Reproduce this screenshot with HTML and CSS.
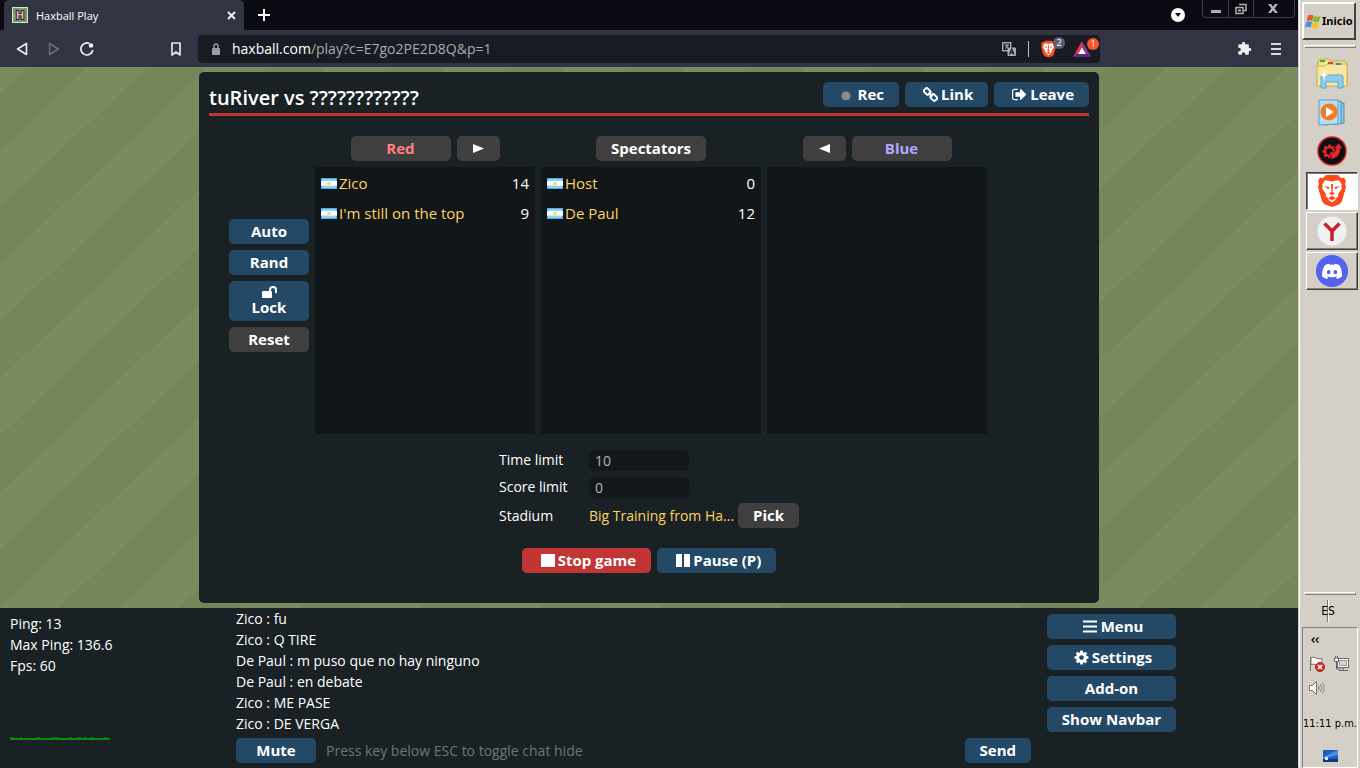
FILE: index.html
```html
<!DOCTYPE html>
<html lang="es">
<head>
<meta charset="utf-8">
<title>Haxball Play</title>
<link rel="stylesheet" href="styles.css">
</head>
<body>
<svg class="defs" aria-hidden="true">
  <symbol id="flag-ar" viewBox="0 0 16 11">
    <rect width="16" height="11" fill="#45aef0"/><rect x="1" y="1" width="14" height="2" fill="#8fd2fa"/><rect x="1" y="8" width="14" height="2" fill="#8fd2fa"/>
    <rect y="3" width="16" height="5" fill="#fbfbfb"/><rect y="7" width="16" height="1" fill="#dfe5ea"/>
    <ellipse cx="8" cy="5.500" rx="2" ry="1.500" fill="#f5dc5a"/>
  </symbol>
  <symbol id="lion" viewBox="0 0 28 32">
    <path d="M8 0h12l3 3 3-.3 2 3.300-1 3 1 3-4 14q-1 2-3 3.500L14 32l-7-2.500Q5 28 4 26L0 12l1-3-1-3 2-3.300L5 3z" fill="#fb4a1c"/>
    <path d="M14 6.500l3-.7 4-.6 3 4.500-.8 2 .8 1.500-4 6 .3 2.300-3 2.200.3 1.300L14 27.500l-3.600-2.500.3-1.300-3-2.200.3-2.300-4-6 .8-1.500-.8-2L7 5.200l4 .6z" fill="#fff"/>
    <path d="M6.500 11l5 1.200-1.200 2.300zM21.500 11l-5 1.200 1.200 2.300zM13 9h2l-.4 8 2.400 1.200L14 20.600l-3-2.400 2.400-1.200zM10.300 23l3.700-2.200 3.700 2.200-3.700 2.500z" fill="#fb4a1c"/>
  </symbol>
</svg>
<div class="desktop">
  <div class="browser">
    <header class="tabstrip">
      <div class="tab">
        <svg class="favicon" viewBox="0 0 16 16"><rect width="16" height="16" fill="#d5e8cc"/><rect x="1" y="1" width="14" height="14" fill="#6f9a5c"/><path d="M1 8l7-7h5L1 13z" fill="#82a970"/><text x="8" y="12" text-anchor="middle" class="favicon-letter">H</text></svg>
        <span class="tab-title">Haxball Play</span>
        <button class="bare" aria-label="Close tab"><svg width="9" height="9" viewBox="0 0 9 9"><path d="M1 1l7 7M8 1L1 8" stroke="#f2f2f4" stroke-width="1.800"/></svg></button>
      </div>
      <button class="bare new-tab" aria-label="New tab"><svg width="12" height="12" viewBox="0 0 12 12"><path d="M6 0v12M0 6h12" stroke="#fff" stroke-width="2"/></svg></button>
      <button class="bare tab-search" aria-label="Search tabs"><svg width="14" height="14" viewBox="0 0 14 14"><circle cx="7" cy="7" r="7" fill="#fff"/><path d="M4 5h6L7 9z" fill="#101018"/></svg></button>
      <div class="window-controls">
        <button class="bare" aria-label="Minimize"><svg width="12" height="12" viewBox="0 0 12 12"><rect x="1" y="7" width="10" height="3" fill="#b0b0b4"/></svg></button>
        <button class="bare" aria-label="Restore"><svg width="12" height="12" viewBox="0 0 12 12"><path d="M4 1.500h7v6H9M1 4.500h7v6H1z" fill="none" stroke="#b0b0b4" stroke-width="1.500"/><rect x="3" y="6.500" width="3" height="2" fill="#b0b0b4"/></svg></button>
        <button class="bare close" aria-label="Close"><svg width="10" height="9" viewBox="0 0 10 9"><path d="M0 0h3l2 2.700L7 0h3L6.500 4.400 10 9H7L5 6.200 3 9H0l3.500-4.600z" fill="#b8b8bc"/></svg></button>
      </div>
    </header>
    <nav class="toolbar">
      <div class="nav-buttons">
        <button class="bare" aria-label="Back"><svg width="12" height="14" viewBox="0 0 12 14"><path d="M10.500 1.500v11L1.500 7z" fill="none" stroke="#eee" stroke-width="1.600" stroke-linejoin="round"/></svg></button>
        <button class="bare" aria-label="Forward"><svg width="12" height="14" viewBox="0 0 12 14"><path d="M1.500 1.500v11L10.500 7z" fill="none" stroke="#6c6e7b" stroke-width="1.500" stroke-linejoin="round"/></svg></button>
        <button class="bare" aria-label="Reload"><svg width="14" height="14" viewBox="0 0 14 14"><path d="M9.500 1.600A6 6 0 1 0 12.800 8" fill="none" stroke="#eee" stroke-width="1.700"/><circle cx="11" cy="3.500" r="2.300" fill="#eee"/></svg></button>
      </div>
      <button class="bare" aria-label="Bookmark"><svg width="10" height="14" viewBox="0 0 10 14"><path d="M1 1h8v12l-4-3-4 3z" fill="none" stroke="#e4e4e8" stroke-width="1.700" stroke-linejoin="round"/></svg></button>
      <div class="address">
        <svg width="8" height="12" viewBox="0 0 8 12"><path d="M2 6V3a2 2 0 0 1 4 0v3" fill="none" stroke="#9a9ca6" stroke-width="1.400"/><rect y="5" width="8" height="7" rx="1" fill="#9a9ca6"/></svg>
        <div class="url" role="textbox" contenteditable="true" spellcheck="false" aria-label="Address"><span class="domain">haxball.com</span>/play?c=E7go2PE2D8Q&amp;p=1</div>
        <svg width="14" height="14" viewBox="0 0 14 14"><rect x=".7" y=".7" width="8" height="8" fill="none" stroke="#a9abb2" stroke-width="1.400"/><path d="M2.500 3h4.500M4.700 2v2M3 6.500q2.500-.8 3.200-3.500M3.500 4.500l3 2" stroke="#a9abb2" fill="none"/><rect x="5.500" y="5.500" width="8.500" height="8.500" rx="1" fill="#a9abb2"/><path d="M7.500 12.500l2.300-5.500 2.200 5.500M8.300 10.800h3" stroke="#181b22" fill="none" stroke-width="1.200"/></svg>
        <span class="divider"></span>
        <button class="bare ext" aria-label="Brave Shields"><svg width="15" height="18" viewBox="0 0 28 32"><use href="#lion"/></svg><span class="badge gray">2</span></button>
        <button class="bare ext" aria-label="Brave Rewards"><svg width="18" height="16" viewBox="0 0 18 16"><path d="M9 0L0 16l9-4.500z" fill="#e8364a"/><path d="M9 0l9 16-9-4.500z" fill="#8a3a9c"/><path d="M0 16h18l-5-4H5z" fill="#5a2a82"/><path d="M9 6.500l3.800 6.500H5.200z" fill="#fff"/></svg><span class="badge orange">1</span></button>
      </div>
      <div class="toolbar-end">
        <button class="bare" aria-label="Extensions"><svg width="15" height="15" viewBox="0 0 24 24"><path d="M20.500 11H19V7a2 2 0 0 0-2-2h-4V3.500a2.500 2.500 0 0 0-5 0V5H4a2 2 0 0 0-2 2v3.800h1.500a2.700 2.700 0 0 1 0 5.400H2V20a2 2 0 0 0 2 2h3.800v-1.500a2.700 2.700 0 0 1 5.400 0V22H17a2 2 0 0 0 2-2v-4h1.500a2.500 2.500 0 0 0 0-5z" fill="#eee"/></svg></button>
        <button class="bare" aria-label="Menu"><svg width="10" height="12" viewBox="0 0 10 12"><path d="M0 1h10M0 6h10M0 11h10" stroke="#dcdce0" stroke-width="2"/></svg></button>
      </div>
    </nav>

    <main class="pitch">
      <section class="room">
        <header class="room-head">
          <h1>tuRiver vs ????????????</h1>
          <button class="btn rec"><svg width="10" height="10" viewBox="0 0 10 10"><circle cx="5" cy="6" r="4.500" fill="#8c8c8c"/></svg>Rec</button>
          <button class="btn"><svg class="ico" viewBox="0 0 15 15"><g fill="none" stroke="#fff" stroke-width="2"><rect x="1" y="2" width="6.500" height="5" rx="2" transform="rotate(45 4.250 4.500)"/><rect x="7.500" y="8" width="6.500" height="5" rx="2" transform="rotate(45 10.750 10.500)"/><path d="M5.500 5.500l4 4"/></g></svg>Link</button>
          <button class="btn"><svg class="ico" viewBox="64 128 1664 1536"><path fill="#fff" d="M704 1440q0 4 1 20t.5 26.500-3 23.500-10 19.500-20.500 6.500h-320q-119 0-203.500-84.500t-84.500-203.500v-704q0-119 84.500-203.500t203.500-84.500h320q13 0 22.500 9.500t9.500 22.500q0 4 1 20t.5 26.500-3 23.500-10 19.500-20.500 6.500h-320q-66 0-113 47t-47 113v704q0 66 47 113t113 47h312l11.500 1 11.500 3 8 5.500 7 9 2 13.500zm928-544q0 26-19 45l-544 544q-19 19-45 19t-45-19-19-45v-288h-448q-26 0-45-19t-19-45v-384q0-26 19-45t45-19h448v-288q0-26 19-45t45-19 45 19l544 544q19 19 19 45z"/></svg>Leave</button>
        </header>
        <div class="teams">
          <div class="tools">
            <button class="btn">Auto</button>
            <button class="btn">Rand</button>
            <button class="btn lock"><svg width="15" height="12" viewBox="0 0 15 12"><rect y="5" width="10" height="7" rx="1" fill="#fff"/><path d="M8 6V4a3 3 0 0 1 6 0v3" fill="none" stroke="#fff" stroke-width="2"/></svg>Lock</button>
            <button class="btn dark">Reset</button>
          </div>
          <div class="team">
            <div class="team-head"><button class="btn dark wide red-text">Red</button><button class="btn dark" aria-label="Move to red"><svg width="11" height="9" viewBox="0 0 11 9"><path d="M0 0l11 4.500L0 9z" fill="#fff"/></svg></button></div>
            <ul class="players">
              <li><svg class="flag"><use href="#flag-ar"/></svg><span class="name">Zico</span><span>14</span></li>
              <li><svg class="flag"><use href="#flag-ar"/></svg><span class="name">I'm still on the top</span><span>9</span></li>
            </ul>
          </div>
          <div class="team">
            <div class="team-head"><button class="btn dark">Spectators</button></div>
            <ul class="players">
              <li><svg class="flag"><use href="#flag-ar"/></svg><span class="name">Host</span><span>0</span></li>
              <li><svg class="flag"><use href="#flag-ar"/></svg><span class="name">De Paul</span><span>12</span></li>
            </ul>
          </div>
          <div class="team">
            <div class="team-head"><button class="btn dark" aria-label="Move to blue"><svg width="11" height="9" viewBox="0 0 11 9"><path d="M11 0L0 4.500 11 9z" fill="#fff"/></svg></button><button class="btn dark wide blue-text">Blue</button></div>
            <ul class="players"></ul>
          </div>
        </div>
        <form class="settings">
          <label for="time">Time limit</label><input id="time" class="field" value="10">
          <label for="score">Score limit</label><input id="score" class="field" value="0">
          <span class="label">Stadium</span>
          <div class="stadium"><span class="stadium-name">Big Training from Ha...</span><button type="button" class="btn dark">Pick</button></div>
        </form>
        <div class="controls">
          <button class="btn stop"><svg class="ico" viewBox="0 0 15 15"><rect x="1" y="1" width="14" height="13" fill="#fff"/></svg>Stop game</button>
          <button class="btn"><svg class="ico" viewBox="0 0 15 15"><path d="M1 1h6v13H1zM9 1h6v13H9z" fill="#fff"/></svg>Pause (P)</button>
        </div>
      </section>
    </main>

    <footer class="bottom">
      <div class="stats">
        <p>Ping: 13</p><p>Max Ping: 136.6</p><p>Fps: 60</p>
        <svg class="graph" viewBox="0 0 100 3"><path d="M0 1h100v2H0z" fill="#0a8a0a"/><path d="M0 .5h4m6 0h2m14 0h4m11 0h8m10 0h3m5 0h4m2 0h4m3 0h4m10 0h3" stroke="#0a700a"/></svg>
      </div>
      <div class="chat">
        <div class="log">
          <p>Zico : fu</p><p>Zico : Q TIRE</p><p>De Paul : m puso que no hay ninguno</p><p>De Paul : en debate</p><p>Zico : ME PASE</p><p>Zico : DE VERGA</p>
        </div>
        <form class="compose">
          <button type="button" class="btn mute">Mute</button>
          <input class="message" aria-label="Chat message" placeholder="Press key below ESC to toggle chat hide">
          <button type="button" class="btn">Send</button>
        </form>
      </div>
      <div class="side-menu">
        <button class="btn"><svg class="ico" viewBox="0 0 15 15"><path d="M0 2.500h14M0 7.500h14M0 12.500h14" stroke="#fff" stroke-width="2"/></svg>Menu</button>
        <button class="btn"><svg class="ico" viewBox="64 64 1664 1664"><path fill="#fff" d="M1152 896q0-106-75-181t-181-75-181 75-75 181 75 181 181 75 181-75 75-181zm512-109v222q0 12-8 23t-20 13l-185 28q-19 54-39 91 35 50 107 138 10 12 10 25t-9 23q-27 37-99 108t-94 71q-12 0-26-9l-138-108q-44 23-91 38-16 136-29 186-7 28-36 28h-222q-14 0-24.500-8.500t-11.500-21.500l-28-184q-49-16-90-37l-141 107q-10 9-25 9-14 0-25-11-126-114-165-168-7-10-7-23 0-12 8-23 15-21 51-66.500t54-70.500q-27-50-41-99l-183-27q-13-2-21-12.500t-8-23.500v-222q0-12 8-23t19-13l186-28q14-46 39-92-40-57-107-138-10-12-10-24 0-10 9-23 26-36 98.500-107.500t94.500-71.500q13 0 26 10l138 107q44-23 91-38 16-136 29-186 7-28 36-28h222q14 0 24.500 8.500t11.500 21.500l28 184q49 16 90 37l142-107q9-9 24-9 13 0 25 10 129 119 165 170 7 8 7 22 0 12-8 23-15 21-51 66.500t-54 70.500q26 50 41 98l183 28q13 2 21 12.500t8 23.500z"/></svg>Settings</button>
        <button class="btn">Add-on</button>
        <button class="btn">Show Navbar</button>
      </div>
    </footer>
  </div>

  <aside class="taskbar">
    <button class="start"><svg width="16" height="15" viewBox="0 0 16 15"><path d="M3 1.500q3-1.500 5.500 0L7.300 7Q4.500 5.500 1.500 7z" fill="#e8552c"/><path d="M9 2q3 1.500 6.500 0L14 7.500q-3 1.500-6.200 0z" fill="#7fba3a"/><path d="M1.300 8q3-1.500 5.700 0l-1.300 5.500Q3 12 0 13.500z" fill="#4b8fdc"/><path d="M7.500 8.500q3 1.500 6.300 0L12.500 14q-3 1.500-6.200 0z" fill="#f5c02c"/></svg>Inicio</button>
    <span class="rule"></span>
    <div class="pinned">
      <button class="bare" aria-label="Explorer"><svg width="32" height="32" viewBox="0 0 32 32"><path d="M2 4l2-3h9l2 2h14l2 3v21H1z" fill="#f3df8c" stroke="#c9a94a"/><path d="M1 8h8l2-2h20v22H1z" fill="#f8e89f" stroke="#d0b050"/><path d="M4 2h5v2H4z" fill="#2fb32f"/><path d="M12 4h5v2h-5z" fill="#d0443a"/><path d="M20 5h5v2h-5z" fill="#2a8ad8"/><path d="M5 19q0-2 2-2h18q2 0 2 2v11h-5v-6H10v6H5z" fill="#8ecdf0" stroke="#58a6d0"/><path d="M8 11l1 5 4 1-4 1-1 5-1-5-4-1 4-1z" fill="#fff"/></svg></button>
      <button class="bare" aria-label="Media Player"><svg width="30" height="28" viewBox="0 0 30 28"><path d="M8 3l19 1v20l-19 2z" fill="#8fc3e3" stroke="#4d94c0"/><path d="M6 2h18v23H6z" fill="#a9d2ea" stroke="#4d94c0"/><path d="M2 1h19v24l-19 1z" fill="#b9dcf1" stroke="#5a9fc8"/><circle cx="12" cy="13" r="8.500" fill="#f27c22"/><path d="M9 8l8 5-8 5z" fill="#fff"/></svg></button>
      <button class="bare" aria-label="Booster"><svg width="30" height="30" viewBox="0 0 30 30"><circle cx="15" cy="15" r="14" fill="#101010" stroke="#c9202a" stroke-width="1.500"/><circle cx="12.500" cy="15.500" r="4.500" fill="none" stroke="#e8252c" stroke-width="2.500"/><path d="M12.500 8.500v2.500M12.500 20v2.500M5.500 15.500H8M7.500 10.500l2 2M7.500 20.500l2-2M17 10.500l-2 2" stroke="#e8252c" stroke-width="2.500"/><path d="M12 17.500l4-3v2q3-1 3-4h-2.500l5-5.500 4.500 5.500h-2.500q0 8-7.500 10.500-2 .5-4-.5l3-1.500z" fill="#e8252c" stroke="#101010" stroke-width=".7"/></svg></button>
    </div>
    <div class="windows">
      <button class="task active" aria-label="Brave"><svg width="28" height="32"><use href="#lion"/></svg></button>
      <button class="task" aria-label="Yandex"><svg width="32" height="32" viewBox="0 0 32 32"><circle cx="16" cy="16" r="15" fill="#f1f1f1" stroke="#d8d8d8"/><path d="M8.500 8.500L16 16l7.500-7.500M16 15.500V26" stroke="#c8202a" stroke-width="3.500" fill="none"/></svg></button>
      <button class="task" aria-label="Discord"><svg width="32" height="32" viewBox="0 0 32 32"><circle cx="16" cy="16" r="16" fill="#5562f0"/><path transform="translate(6 6.300) scale(.84)" fill="#fff" d="M20.317 4.370a19.791 19.791 0 0 0-4.885-1.515.074.074 0 0 0-.079.037c-.21.375-.444.865-.608 1.250a18.270 18.270 0 0 0-5.487 0 12.640 12.640 0 0 0-.617-1.250.077.077 0 0 0-.079-.037A19.736 19.736 0 0 0 3.677 4.370a.07.07 0 0 0-.032.028C.533 9.046-.32 13.580.099 18.058a.082.082 0 0 0 .031.056 19.900 19.900 0 0 0 5.993 3.030.078.078 0 0 0 .084-.028c.462-.63.874-1.295 1.226-1.994a.076.076 0 0 0-.042-.106 13.107 13.107 0 0 1-1.872-.892.077.077 0 0 1-.008-.128c.126-.094.252-.192.372-.291a.074.074 0 0 1 .078-.01c3.928 1.793 8.180 1.793 12.062 0a.074.074 0 0 1 .078.009c.12.1.246.199.373.292a.077.077 0 0 1-.006.128 12.300 12.300 0 0 1-1.873.891.077.077 0 0 0-.041.107c.36.698.772 1.363 1.225 1.993a.076.076 0 0 0 .084.029 19.839 19.839 0 0 0 6.002-3.030.077.077 0 0 0 .031-.055c.5-5.177-.838-9.674-3.549-13.660a.061.061 0 0 0-.031-.029zM8.020 15.330c-1.183 0-2.157-1.086-2.157-2.419s.955-2.419 2.157-2.419c1.210 0 2.176 1.096 2.157 2.419 0 1.333-.956 2.419-2.157 2.419zm7.975 0c-1.183 0-2.157-1.086-2.157-2.419s.955-2.419 2.157-2.419c1.210 0 2.176 1.096 2.157 2.419 0 1.333-.946 2.419-2.157 2.419z"/></svg></button>
    </div>
    <div class="task-end">
      <span class="rule"></span>
      <div class="lang">ES</div>
      <div class="tray">
        <button class="bare chevron" aria-label="Show hidden icons"><svg width="8" height="6" viewBox="0 0 8 6"><path d="M3.500.5L1 3l2.500 2.500M7.500.5L5 3l2.500 2.500" stroke="#111" stroke-width="1.400" fill="none"/></svg></button>
        <div class="tray-icons">
          <svg width="16" height="16" viewBox="0 0 16 16"><path d="M1.500 1v14M2 1.500q3-1 5 .5t6 .5v7q-4 1-6-.5t-5-.5z" fill="#fff" stroke="#777"/><circle cx="11" cy="11" r="4.500" fill="#e0302c" stroke="#a81c1c"/><path d="M9 9l4 4M13 9l-4 4" stroke="#fff" stroke-width="1.600"/></svg>
          <svg width="16" height="16" viewBox="0 0 16 16"><rect x="4.500" y="2.500" width="11" height="9" fill="#fff" stroke="#666"/><rect x="6.500" y="4.500" width="7" height="5" fill="#d4d4d4" stroke="#999"/><path d="M6 14.500h9M10 12v2" stroke="#666"/><path d="M3.500 6v7h4" fill="none" stroke="#666"/><path d="M1.500 2v3.500h4V2zM2.500 0v2M4.500 0v2" fill="#fff" stroke="#666"/></svg>
          <svg width="16" height="16" viewBox="0 0 16 16"><path d="M.5 5.500h3l4-4v13l-4-4h-3z" fill="#fff" stroke="#777"/><path d="M9.500 5.500q1.500 2.500 0 5M11.500 4q2.500 4 0 8M13.500 2.500q3.500 5.500 0 11" fill="none" stroke="#888"/></svg>
        </div>
        <time>11:11 p.m.</time>
        <button class="bare show-desktop" aria-label="Show desktop"><svg width="15" height="12" viewBox="0 0 15 12"><rect width="15" height="12" fill="#1c5fc4"/><path d="M0 7L15 0v5L0 9z" fill="#4a90e4"/><rect y="9" width="15" height="3" fill="#123a72"/><path d="M2 7h3v3H2z" fill="#d8ecff"/></svg></button>
      </div>
    </div>
  </aside>
</div>
</body>
</html>
```

FILE: styles.css
```css
* { box-sizing: border-box; }
body { margin: 0; font: 14px/21px "Open Sans", sans-serif; color: #fff; }
p, h1, ul { margin: 0; padding: 0; }
svg { display: block; flex: none; }
button, input { font: inherit; color: inherit; }
.defs { position: absolute; width: 0; height: 0; }
.bare { display: grid; place-items: center; border: 0; padding: 0; background: none; }

.desktop { display: flex; min-height: 100vh; }
.browser { flex: 1; min-width: 0; display: flex; flex-direction: column; background: #1a2125; }

/* Browser chrome */
.tabstrip { display: flex; height: 30px; background: #0a0a13; }
.tab { display: flex; align-items: center; gap: 8px; width: 240px; margin-left: 4px; padding: 0 8px; background: #323443; border-radius: 5px 5px 0 0; }
.favicon { width: 16px; height: 16px; }
.favicon-letter { font: bold 11px "Liberation Sans", sans-serif; fill: #ffb09a; stroke: #1c2050; stroke-width: 2px; paint-order: stroke; }
.tab-title { flex: 1; font-size: 11px; }
.new-tab { width: 40px; }
.tab-search { margin-left: auto; margin-right: 17px; }
.window-controls { display: flex; height: 18px; width: 93px; margin-right: 3px; border: 1px solid #3c3c46; border-top: 0; border-radius: 0 0 4px 4px; }
.window-controls .bare { width: 25px; }
.window-controls .bare + .bare { border-left: 1px solid #3c3c46; }
.window-controls .close { flex: 1; padding-right: 3px; }
.toolbar { display: flex; align-items: center; gap: 16px; height: 37px; padding: 0 17px 0 16px; background: #323443; }
.nav-buttons { display: flex; gap: 20px; width: 139px; }
.address { display: flex; align-items: center; gap: 12px; flex: 1; height: 28px; margin-left: 1px; padding: 0 1px 0 14px; background: #181b22; border-radius: 4px; }
.url { flex: 1; min-width: 0; color: #a8aab2; white-space: nowrap; }
.domain { color: #fff; }
.divider { width: 1px; height: 16px; background: #c0c0c4; }
.ext { display: flex; width: 24px; position: relative; }
.ext + .ext { width: 26px; margin-left: -4px; }
.badge { position: absolute; right: 0; top: -3px; width: 12px; height: 12px; border-radius: 6px; font-size: 9px; line-height: 12px; }
.gray { background: #5d6070; }
.orange { background: #fb542b; }
.toolbar-end { display: flex; justify-content: flex-end; gap: 19px; width: 165px; }

/* Room */
.pitch { flex: 1; padding: 5px; display: flex; justify-content: center; background: linear-gradient(to bottom right, #75865a 25%, #7c8b5f 25% 50%, #75865a 50% 75%, #7c8b5f 75%) 28px 0 / 120px 114px; }
.room { width: 100%; max-width: 900px; padding: 10px; background: #1a2125; border-radius: 5px; }
.room-head { display: flex; align-items: flex-start; gap: 6px; height: 34px; border-bottom: 3px solid #c13535; }
h1 { flex: 1; font-size: 20px; line-height: 32px; font-weight: 600; }
.btn { display: inline-flex; align-items: center; justify-content: center; height: 25px; padding: 0 15px; border: 0; border-radius: 5px; background: #244967; color: #fff; font-size: 15px; font-weight: 700; line-height: 15px; white-space: nowrap; }
.ico { width: 15px; height: 15px; margin: 0 3px; }
.dark { background: #3f3f3f; }
.stop { background: #c13535; }
.rec { gap: 7px; padding-left: 18px; }
.teams { display: flex; gap: 6px; padding: 20px 20px 0; }
.tools { display: flex; flex-direction: column; justify-content: center; gap: 6px; width: 80px; }
.lock { flex-direction: column; gap: 2px; height: 40px; }
.team { width: 220px; }
.team-head { display: flex; justify-content: center; gap: 6px; margin-bottom: 6px; }
.team-head .btn:not(.wide):has(svg) { width: 43px; }
.wide { width: 100px; }
.red-text { color: #ff8080; }
.blue-text { color: #b0a8ff; }
.players { height: 267px; padding: 1px 6px; background: #111619; list-style: none; }
.players li { display: flex; align-items: center; gap: 2px; height: 30px; font-size: 15px; }
.flag { width: 16px; height: 11px; }
.name { flex: 1; color: #ffd35f; }
.settings { display: grid; grid-template-columns: 90px 210px; justify-content: center; align-items: center; row-gap: 6px; padding-top: 16px; }
.settings label, .settings .label { padding-bottom: 2px; }
.settings label { line-height: 19px; }
.field { width: 100px; height: 21px; padding: 0 6px; border: 0; border-radius: 5px; background: #13181b; color: #b4b4b4; }
.stadium { display: flex; justify-content: space-between; align-items: center; margin-top: -1px; }
.stadium-name { white-space: nowrap; color: #ffd35f; }
.controls { display: flex; justify-content: center; gap: 6px; padding: 20px 0; }

/* Bottom bar */
.bottom { display: flex; height: 160px; }
.stats { display: flex; flex-direction: column; width: 236px; padding: 5px 10px 28px; }
.graph { width: 100px; height: 3px; margin-top: auto; }
.chat { flex: 1; display: flex; flex-direction: column; }
.compose { display: flex; margin-top: 4px; }
.mute { width: 80px; }
.message { flex: 1; min-width: 0; padding: 0 10px; border: 0; background: none; }
.message::placeholder { color: #717577; }
.side-menu { display: flex; flex-direction: column; gap: 6px; width: 129px; margin: 6px 122px 0 16px; }

/* Taskbar */
.taskbar { display: flex; flex-direction: column; align-items: center; width: 62px; padding: 2px 0 0 2px; background: #d4d0c8; box-shadow: inset 1px 0 #d4d0c8, inset 2px 0 #fff; color: #000; font: 11px/14px "DejaVu Sans Condensed", "DejaVu Sans", sans-serif; }
.start { display: flex; align-items: center; gap: 1px; width: 54px; height: 38px; margin-right: 2px; padding: 0 1px; border: 2px solid; border-color: #fff #404040 #404040 #fff; background: #d4d0c8; font-family: "Noto Sans", sans-serif; font-size: 11px; font-weight: 700; }
.rule { display: block; width: 52px; height: 3px; margin: 5px 0; border: 1px solid; border-color: #fff #808080 #808080 #fff; }
.pinned { display: flex; flex-direction: column; align-items: center; gap: 9px; padding: 5px 0 0 4px; }
.windows { display: flex; flex-direction: column; gap: 2px; margin: 6px 0 0 4px; }
.task { display: grid; place-items: center; width: 52px; height: 38px; padding: 0; border: 1px solid; border-color: #fff #404040 #404040 #fff; box-shadow: inset -1px -1px #808080; background: #d4d0c8; }
.active { border-color: #404040 #fff #fff #404040; box-shadow: inset 1px 1px #808080; background: #fff; }
.task-end { display: flex; flex-direction: column; align-items: center; margin-top: auto; }
.task-end .rule { margin: 0 0 5px; }
.lang { width: 28px; height: 22px; line-height: 22px; margin-right: 4px; text-align: center; font-size: 12px; background: linear-gradient(90deg, #777 50%, #fff 50%) center / 2px 22px no-repeat; }
.tray { display: flex; flex-direction: column; width: 56px; height: 141px; margin-top: 5px; border: 1px solid; border-color: #808080 #fff #fff #808080; }
.chevron { margin: 9px 8px 0; width: 8px; }
.tray-icons { display: flex; flex-wrap: wrap; gap: 8px; padding: 13px 6px 0; }
.tray time { margin-top: 21px; text-align: center; white-space: nowrap; }
.show-desktop { margin: 19px auto 0; }
```
